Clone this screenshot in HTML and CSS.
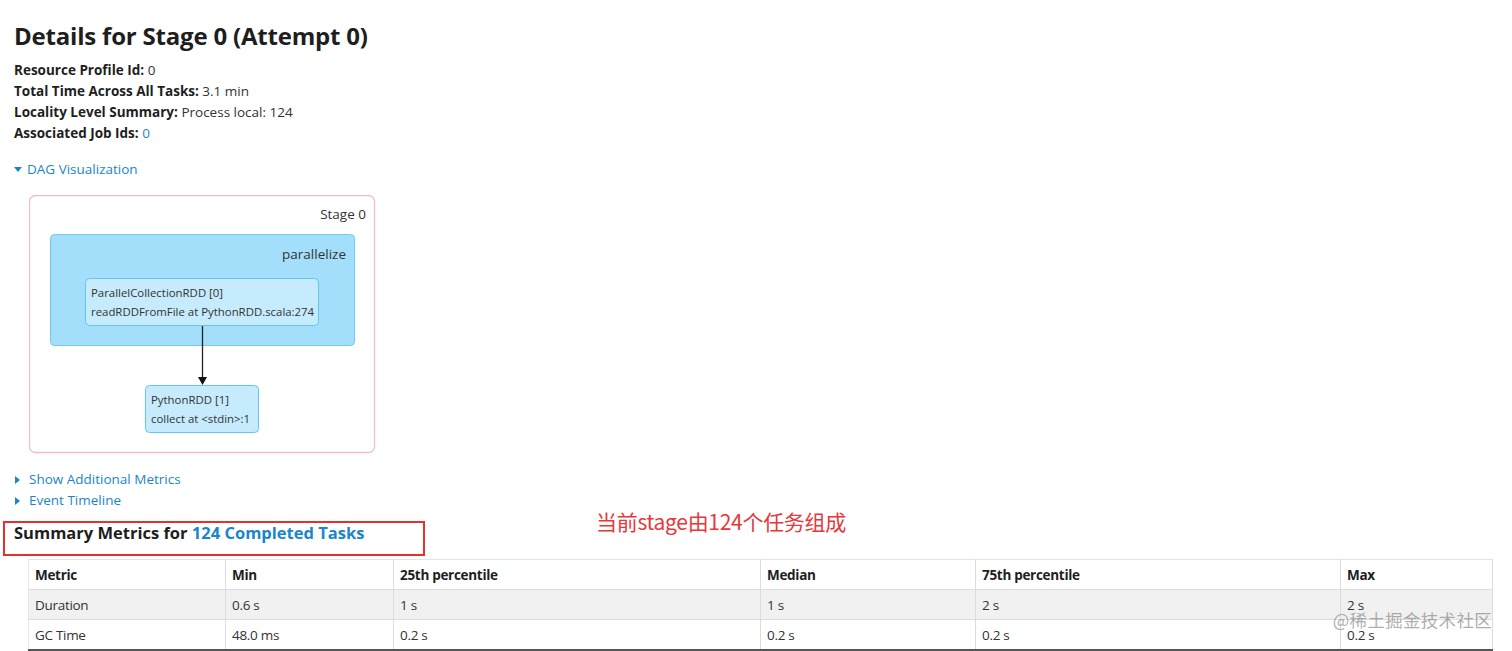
FILE: index.html
```html
<!DOCTYPE html>
<html lang="en">
<head>
<meta charset="utf-8">
<title>Details for Stage 0 (Attempt 0)</title>
<link rel="stylesheet" href="styles.css">
</head>
<body>
<div class="page">
  <h3 class="title">Details for Stage 0 (Attempt 0)</h3>
  <ul class="info">
    <li><strong>Resource Profile Id:</strong> 0</li>
    <li><strong>Total Time Across All Tasks:</strong> 3.1 min</li>
    <li><strong>Locality Level Summary:</strong> Process local: 124</li>
    <li><strong>Associated Job Ids:</strong> <a class="link" href="#">0</a></li>
  </ul>

  <div class="toggle dag-toggle"><span class="arrow-down"></span><a class="link" href="#">DAG Visualization</a></div>

  <div class="dag">
    <svg width="347" height="259" viewBox="0 0 347 259" xmlns="http://www.w3.org/2000/svg">
      <rect x="0.5" y="0.5" width="345" height="257" rx="6" ry="6" fill="#fff" stroke="#f4bccb" stroke-width="1.3"/>
      <text x="337" y="24" text-anchor="end" class="svg-stage">Stage 0</text>
      <rect x="21.5" y="39.5" width="304" height="111" rx="4" ry="4" fill="#a3dffb" stroke="#6fcbf1" stroke-width="1"/>
      <text x="317" y="64" text-anchor="end" class="svg-cluster">parallelize</text>
      <rect x="56.5" y="83.5" width="233" height="47" rx="4" ry="4" fill="#c6ebfd" stroke="#62c6f0" stroke-width="1"/>
      <text x="62" y="102" class="svg-node">ParallelCollectionRDD [0]</text>
      <text x="62" y="121" class="svg-node">readRDDFromFile at PythonRDD.scala:274</text>
      <line x1="173.5" y1="131" x2="173.5" y2="183" stroke="#222" stroke-width="1.3"/>
      <polygon points="169,182 178,182 173.5,190" fill="#111"/>
      <rect x="116.5" y="190.5" width="113" height="47" rx="4" ry="4" fill="#c6ebfd" stroke="#62c6f0" stroke-width="1"/>
      <text x="122" y="209" class="svg-node">PythonRDD [1]</text>
      <text x="122" y="228" class="svg-node">collect at &lt;stdin&gt;:1</text>
    </svg>
  </div>

  <div class="toggles">
    <div class="toggle"><span class="arrow-right"></span><a class="link" href="#">Show Additional Metrics</a></div>
    <div class="toggle"><span class="arrow-right"></span><a class="link" href="#">Event Timeline</a></div>
  </div>

  <div class="summary">
    <h4 class="summary-title">Summary Metrics for <a class="link" href="#">124 Completed Tasks</a></h4>
    <div class="red-box"></div>
    <div class="note">当前stage由124个任务组成</div>
  </div>

  <div class="table-wrap">
    <table class="metrics">
      <colgroup>
        <col style="width:197px"><col style="width:168px"><col style="width:367px"><col style="width:215px"><col style="width:365px"><col style="width:152px">
      </colgroup>
      <thead>
        <tr><th>Metric</th><th>Min</th><th>25th percentile</th><th>Median</th><th>75th percentile</th><th>Max</th></tr>
      </thead>
      <tbody>
        <tr class="odd"><td>Duration</td><td>0.6 s</td><td>1 s</td><td>1 s</td><td>2 s</td><td>2 s</td></tr>
        <tr><td>GC Time</td><td>48.0 ms</td><td>0.2 s</td><td>0.2 s</td><td>0.2 s</td><td>0.2 s</td></tr>
      </tbody>
    </table>
    <div class="watermark">@稀土掘金技术社区</div>
  </div>
</div>
</body>
</html>
```

FILE: styles.css
```css
html, body {
  margin: 0;
  padding: 0;
  background: #fff;
}
body {
  font-family: "Open Sans", "Noto Sans", "Liberation Sans", "Noto Sans CJK SC", sans-serif;
  color: #222;
  font-size: 14px;
}
.page {
  padding: 21px 14px 0 14px;
}
.title {
  margin: 0;
  font-size: 24px;
  line-height: 30px;
  font-weight: 700;
  color: #1e1e1e;
  letter-spacing: -0.2px;
}
.info {
  list-style: none;
  margin: 9px 0 0 0;
  padding: 0;
  font-size: 13.5px;
  line-height: 21px;
  color: #333;
}
.info strong {
  color: #1e1e1e;
  font-weight: 700;
}
.link {
  color: #1a86c8;
  text-decoration: none;
}
.toggle {
  display: flex;
  align-items: center;
  font-size: 13.5px;
  line-height: 21px;
}
.dag-toggle {
  margin-top: 15px;
}
.arrow-down {
  width: 0;
  height: 0;
  border-left: 4.5px solid transparent;
  border-right: 4.5px solid transparent;
  border-top: 5px solid #1a86c8;
  margin-right: 5px;
}
.arrow-right {
  width: 0;
  height: 0;
  border-top: 4.5px solid transparent;
  border-bottom: 4.5px solid transparent;
  border-left: 5px solid #1a86c8;
  margin-right: 9px;
  margin-left: 1px;
}
.dag {
  margin: 15px 0 0 15px;
  height: 259px;
}
.dag svg {
  display: block;
}
.svg-stage {
  font-family: "Open Sans", "Noto Sans", sans-serif;
  font-size: 13.5px;
  fill: #333;
}
.svg-cluster {
  font-family: "Open Sans", "Noto Sans", sans-serif;
  font-size: 13.5px;
  fill: #333;
}
.svg-node {
  font-family: "Open Sans", "Noto Sans", sans-serif;
  font-size: 11.4px;
  fill: #333;
}
.toggles {
  margin-top: 15px;
}
.summary {
  position: relative;
  margin-top: 11px;
  height: 37px;
}
.summary-title {
  margin: 0;
  padding-top: 0;
  font-size: 16.5px;
  line-height: 22px;
  font-weight: 700;
  color: #1e1e1e;
}
.red-box {
  position: absolute;
  left: -11px;
  top: -1px;
  width: 418px;
  height: 31px;
  border: 2px solid #e2312f;
}
.note {
  position: absolute;
  left: 582px;
  top: -15px;
  font-family: "Noto Sans CJK SC", sans-serif;
  font-size: 21px;
  line-height: 28px;
  color: #e8363a;
  letter-spacing: -0.3px;
}
.table-wrap {
  position: relative;
  margin-left: 14px;
  width: 1464px;
}
.metrics {
  width: 1464px;
  border-collapse: collapse;
  table-layout: fixed;
  font-size: 13.5px;
  color: #333;
}
.metrics th, .metrics td {
  height: 29px;
  padding: 0 6px;
  text-align: left;
  border: 1px solid #dcdcdc;
  white-space: nowrap;
  overflow: hidden;
  letter-spacing: -0.3px;
}
.metrics th {
  font-weight: 700;
  color: #1e1e1e;
  border-top: 1px solid #e4e4e4;
}
.metrics tr.odd td {
  background: #f1f1f1;
}
.metrics tbody tr:last-child td {
  border-bottom: 2px solid #555;
}
.metrics th:first-child, .metrics td:first-child {
  border-left-color: #e8e8e8;
}
.watermark {
  position: absolute;
  right: 0;
  top: 49px;
  font-family: "Noto Sans CJK SC", sans-serif;
  font-size: 17.5px;
  line-height: 24px;
  color: rgba(120, 120, 120, 0.6);
  letter-spacing: 0.3px;
  pointer-events: none;
}
```
